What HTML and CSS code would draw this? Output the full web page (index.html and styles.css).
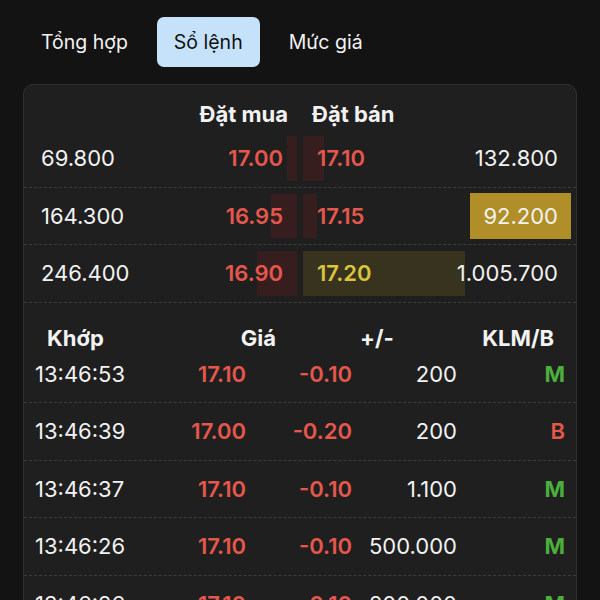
FILE: index.html
```html
<!DOCTYPE html>
<html lang="vi">
<head>
    <meta charset="UTF-8">
    <meta name="viewport" content="width=device-width, initial-scale=1.0">
    <title>Sổ lệnh</title>
    <link rel="stylesheet" href="styles.css">
</head>
<body>

    <nav class="tabs">
        <a href="#" class="tab">Tổng hợp</a>
        <a href="#" class="tab active">Sổ lệnh</a>
        <a href="#" class="tab">Mức giá</a>
    </nav>

    <div class="card">
        <div class="book-head">
            <span class="book-title bid-title">Đặt mua</span>
            <span class="book-title ask-title">Đặt bán</span>
        </div>

        <div class="book-row">
            <div class="side bid">
                <span class="bar" style="width: 10px"></span>
                <span class="vol">69.800</span>
                <span class="price">17.00</span>
            </div>
            <div class="side ask">
                <span class="bar" style="width: 21px"></span>
                <span class="price">17.10</span>
                <span class="vol">132.800</span>
            </div>
        </div>

        <div class="book-row">
            <div class="side bid">
                <span class="bar" style="width: 26px"></span>
                <span class="vol">164.300</span>
                <span class="price">16.95</span>
            </div>
            <div class="side ask">
                <span class="bar" style="width: 14px"></span>
                <span class="price">17.15</span>
                <span class="vol flash">92.200</span>
            </div>
        </div>

        <div class="book-row">
            <div class="side bid">
                <span class="bar" style="width: 40px"></span>
                <span class="vol">246.400</span>
                <span class="price">16.90</span>
            </div>
            <div class="side ask">
                <span class="bar ref" style="width: 162px"></span>
                <span class="price ref">17.20</span>
                <span class="vol">1.005.700</span>
            </div>
        </div>

        <div class="trades-head">
            <span class="th-time">Khớp</span>
            <span class="th-price">Giá</span>
            <span class="th-change">+/-</span>
            <span class="th-side">KLM/B</span>
        </div>

        <div class="trade-row">
            <span class="t-time">13:46:53</span>
            <span class="t-price down">17.10</span>
            <span class="t-change down">-0.10</span>
            <span class="t-vol">200</span>
            <span class="t-side buy">M</span>
        </div>
        <div class="trade-row">
            <span class="t-time">13:46:39</span>
            <span class="t-price down">17.00</span>
            <span class="t-change down">-0.20</span>
            <span class="t-vol">200</span>
            <span class="t-side sell">B</span>
        </div>
        <div class="trade-row">
            <span class="t-time">13:46:37</span>
            <span class="t-price down">17.10</span>
            <span class="t-change down">-0.10</span>
            <span class="t-vol">1.100</span>
            <span class="t-side buy">M</span>
        </div>
        <div class="trade-row">
            <span class="t-time">13:46:26</span>
            <span class="t-price down">17.10</span>
            <span class="t-change down">-0.10</span>
            <span class="t-vol">500.000</span>
            <span class="t-side buy">M</span>
        </div>
        <div class="trade-row">
            <span class="t-time">13:46:26</span>
            <span class="t-price down">17.10</span>
            <span class="t-change down">-0.10</span>
            <span class="t-vol">200.000</span>
            <span class="t-side buy">M</span>
        </div>
    </div>

</body>
</html>
```

FILE: styles.css
```css
body {
    font-family: Inter, "Noto Sans", sans-serif;
    margin: 0;
    height: 600px;
    overflow: hidden;
    background-color: #131313;
    color: #f2f2f2;
}

.tabs {
    display: flex;
    gap: 12px;
    padding: 17px 24px 0;
}

.tab {
    height: 50px;
    line-height: 50px;
    padding: 0 17px;
    border-radius: 7px;
    color: #f2f2f2;
    text-decoration: none;
    font-size: 19.5px;
}

.tab.active {
    background-color: #c6e2fa;
    color: #111;
}

.card {
    margin: 17px 23px 0;
    background: #1f1f1f;
    border: 1px solid #2f2f2f;
    border-radius: 10px;
}

/* order book */

.book-head {
    display: grid;
    grid-template-columns: 1fr 1fr;
    height: 45px;
    align-items: end;
    padding-bottom: 3px;
    box-sizing: border-box;
    font-size: 22px;
    font-weight: 700;
    line-height: 26px;
}

.bid-title {
    text-align: right;
    padding-right: 12px;
}

.ask-title {
    padding-left: 12px;
}

.book-row {
    display: grid;
    grid-template-columns: 1fr 1fr;
    height: 57.5px;
    box-sizing: border-box;
    border-bottom: 1px dashed #3c3c3c;
    font-size: 22px;
}

.side {
    position: relative;
    display: flex;
    align-items: center;
    justify-content: space-between;
}

.bid {
    padding: 0 17px 0 4px;
}

.ask {
    padding: 0 5px 0 17px;
}

.bar {
    position: absolute;
    top: 6px;
    bottom: 6px;
    background-color: #371e1e;
}

.bid .bar {
    right: 3px;
}

.ask .bar {
    left: 3px;
}

.bar.ref {
    background-color: #38331e;
}

.vol,
.price {
    position: relative;
}

.vol {
    display: flex;
    align-items: center;
    height: 46px;
    padding: 0 13px;
}

.vol.flash {
    background-color: #b08f28;
}

.price {
    color: #e4574c;
    font-weight: 600;
}

.price.ref {
    color: #d9c53b;
}

/* matched trades */

.trades-head,
.trade-row {
    display: grid;
    font-size: 22px;
}

.trades-head {
    grid-template-columns: 126px 126px 202px 98px;
    height: 43px;
    padding-top: 22px;
    box-sizing: border-box;
    line-height: 26px;
    font-weight: 700;
}

.th-time {
    padding-left: 23px;
}

.th-price {
    text-align: right;
}

.th-change {
    text-align: center;
}

.th-side {
    text-align: right;
    padding-right: 22px;
}

.trade-row {
    grid-template-columns: 126px 96px 106px 105px 119px;
    align-items: center;
    height: 57.5px;
    box-sizing: border-box;
    border-bottom: 1px dashed #3c3c3c;
}

.t-time {
    padding-left: 11px;
}

.t-price,
.t-change,
.t-vol,
.t-side {
    text-align: right;
}

.t-side {
    padding-right: 11px;
    font-weight: 700;
}

.down,
.sell {
    color: #e4574c;
    font-weight: 600;
}

.buy {
    color: #4cae3c;
}
```
